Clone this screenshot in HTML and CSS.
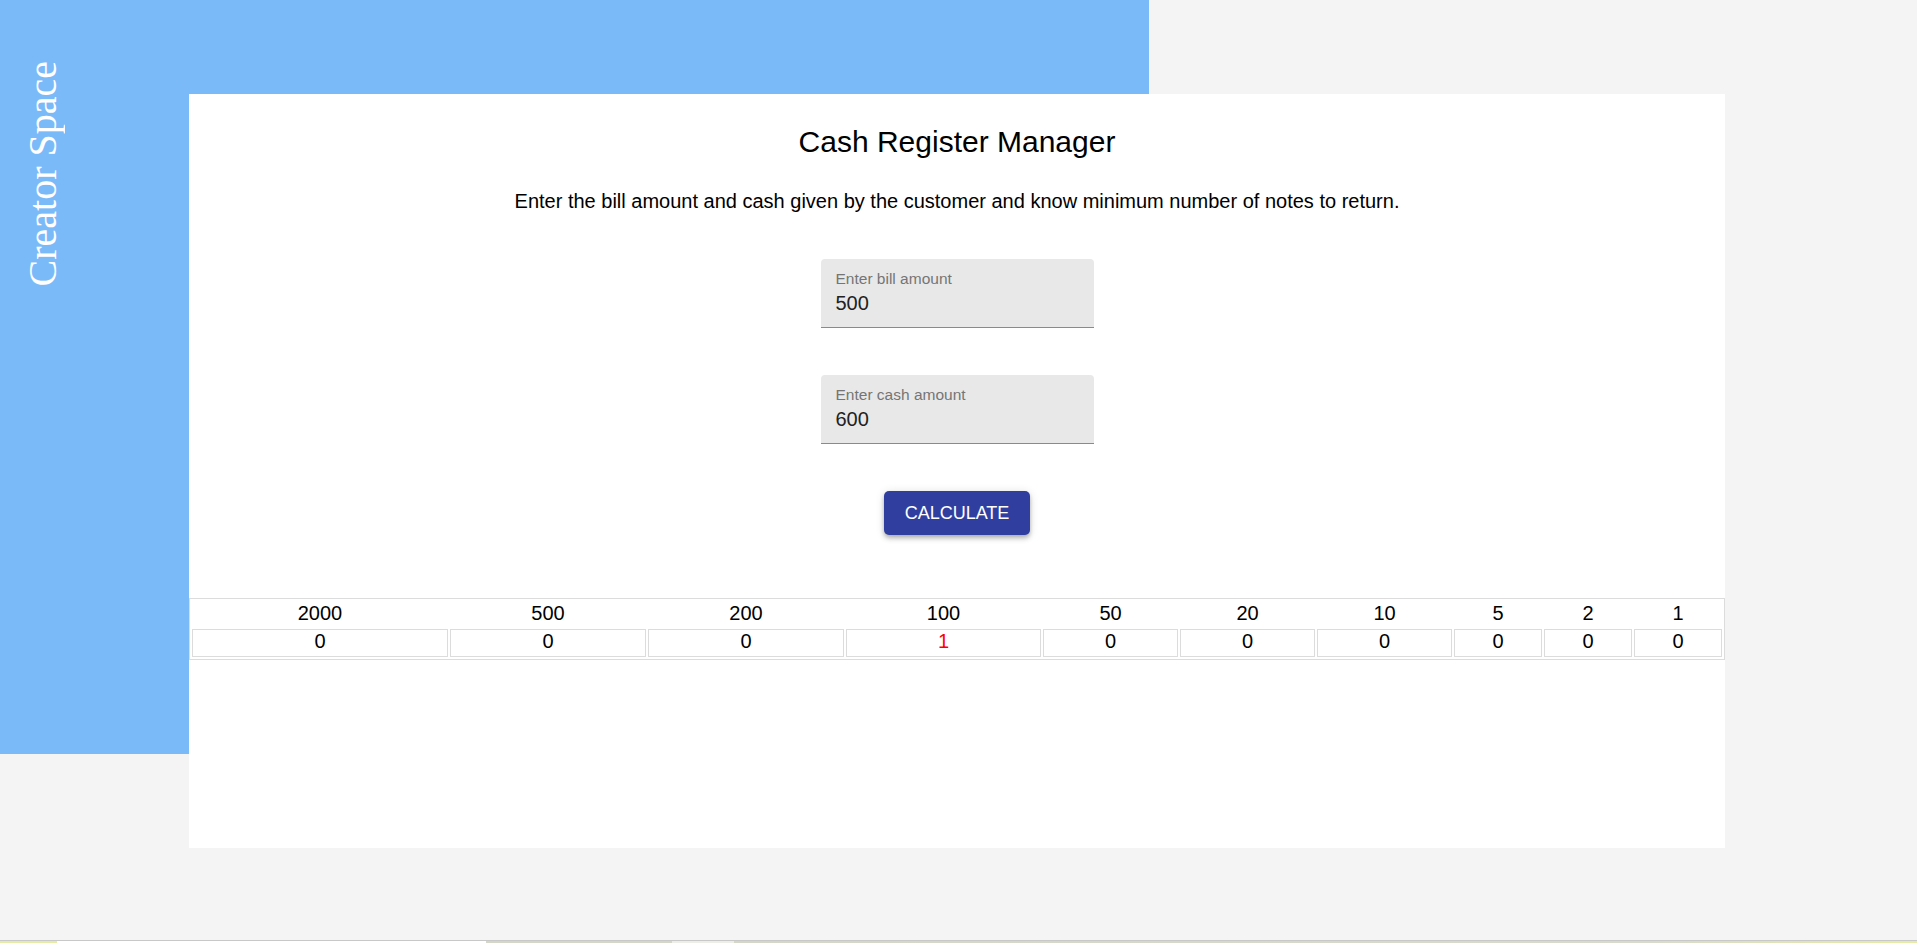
FILE: index.html
```html
<!DOCTYPE html>
<html lang="en">
<head>
<meta charset="utf-8">
<title>Cash Register Manager</title>
<link rel="stylesheet" href="styles.css">
</head>
<body>
<div class="layout">
  <aside class="brand">
    <h2 class="brand-title">Creator Space</h2>
  </aside>
  <main class="card">
    <h1 class="title">Cash Register Manager</h1>
    <p class="subtitle">Enter the bill amount and cash given by the customer and know minimum number of notes to return.</p>
    <div class="form">
      <label class="field">
        <span class="field-label">Enter bill amount</span>
        <span class="field-value">500</span>
      </label>
      <label class="field">
        <span class="field-label">Enter cash amount</span>
        <span class="field-value">600</span>
      </label>
      <button class="btn" type="button">CALCULATE</button>
    </div>
    <table class="notes">
      <colgroup>
        <col class="c1"><col class="c2"><col class="c2"><col class="c4">
        <col class="c5"><col class="c5"><col class="c5">
        <col class="c8"><col class="c8"><col class="c8">
      </colgroup>
      <tr>
        <th>2000</th><th>500</th><th>200</th><th>100</th><th>50</th><th>20</th><th>10</th><th>5</th><th>2</th><th>1</th>
      </tr>
      <tr>
        <td>0</td><td>0</td><td>0</td><td class="hit">1</td><td>0</td><td>0</td><td>0</td><td>0</td><td>0</td><td>0</td>
      </tr>
    </table>
  </main>
</div>
<div class="strip"></div>
</body>
</html>
```
FILE: styles.css
```css
html, body {
  margin: 0;
  padding: 0;
}
body {
  background: #f4f4f4;
  height: 943px;
  overflow: hidden;
  font-family: "Liberation Sans", Arial, sans-serif;
  color: #000;
}
.layout {
  display: grid;
  grid-template-columns: 189px 960px 576px;
  grid-template-rows: 94px 660px 94px;
}
.brand {
  grid-column: 1 / 3;
  grid-row: 1 / 3;
  background: #7bbaf9;
  padding: 61px 0 0 20px;
}
.brand-title {
  margin: 0;
  font-family: "Liberation Serif", "Times New Roman", serif;
  font-weight: normal;
  font-size: 40px;
  line-height: 46px;
  color: #fff;
  writing-mode: vertical-rl;
  transform: rotate(180deg);
  width: 46px;
}
.card {
  grid-column: 2 / 4;
  grid-row: 2 / 4;
  background: #fff;
  display: flex;
  flex-direction: column;
  align-items: center;
  padding-top: 31px;
}
.title {
  margin: 0;
  font-size: 30px;
  line-height: 34px;
  font-weight: normal;
}
.subtitle {
  margin: 31px 0 0;
  font-size: 20px;
  line-height: 23px;
}
.form {
  display: flex;
  flex-direction: column;
  align-items: center;
  gap: 47px;
  margin-top: 46px;
}
.field {
  display: flex;
  flex-direction: column;
  box-sizing: border-box;
  width: 273px;
  height: 69px;
  background: #e8e8e8;
  border-radius: 4px 4px 0 0;
  border-bottom: 1px solid #8a8a8a;
  padding: 11px 15px 0;
}
.field-label {
  font-size: 15.5px;
  line-height: 17px;
  color: #757575;
}
.field-value {
  margin-top: 5px;
  font-size: 20px;
  line-height: 23px;
  color: #212121;
}
.btn {
  width: 146px;
  height: 44px;
  border: none;
  border-radius: 5px;
  background: #303f9f;
  color: #fff;
  font-family: "Liberation Sans", Arial, sans-serif;
  font-size: 18px;
  padding: 0;
  box-shadow: 0 2px 4px -1px rgba(0,0,0,0.2), 0 4px 5px 0 rgba(0,0,0,0.14), 0 1px 10px 0 rgba(0,0,0,0.12);
}
.notes {
  margin-top: 63px;
  width: 100%;
  border: 1px solid #dcdcdc;
  border-spacing: 2px;
  table-layout: fixed;
  font-size: 20px;
}
.notes .c1 { width: 256px; }
.notes .c2 { width: 196px; }
.notes .c4 { width: 195px; }
.notes .c5 { width: 135px; }
.notes .c8 { width: 88px; }
.notes th {
  font-weight: normal;
  padding: 0 1px 2px;
  line-height: 24px;
}
.notes td {
  border: 1px solid #dcdcdc;
  padding: 0 1px 3px;
  line-height: 23px;
  text-align: center;
}
.notes td.hit {
  color: #f00;
}
.strip {
  position: fixed;
  left: 0;
  right: 0;
  bottom: 0;
  height: 2px;
  background: linear-gradient(to right, #e6eba5 0, #e6eba5 57px, #ffffff 57px, #ffffff 486px, #d4d7c8 486px, #d4d7c8 672px, #eeeee8 672px, #eeeee8 734px, #d4d7c8 734px, #d8dbcc 1650px, #e6eba5 1900px, #e6eba5 100%);
  border-top: 1px solid #c8c8c8;
}
```
